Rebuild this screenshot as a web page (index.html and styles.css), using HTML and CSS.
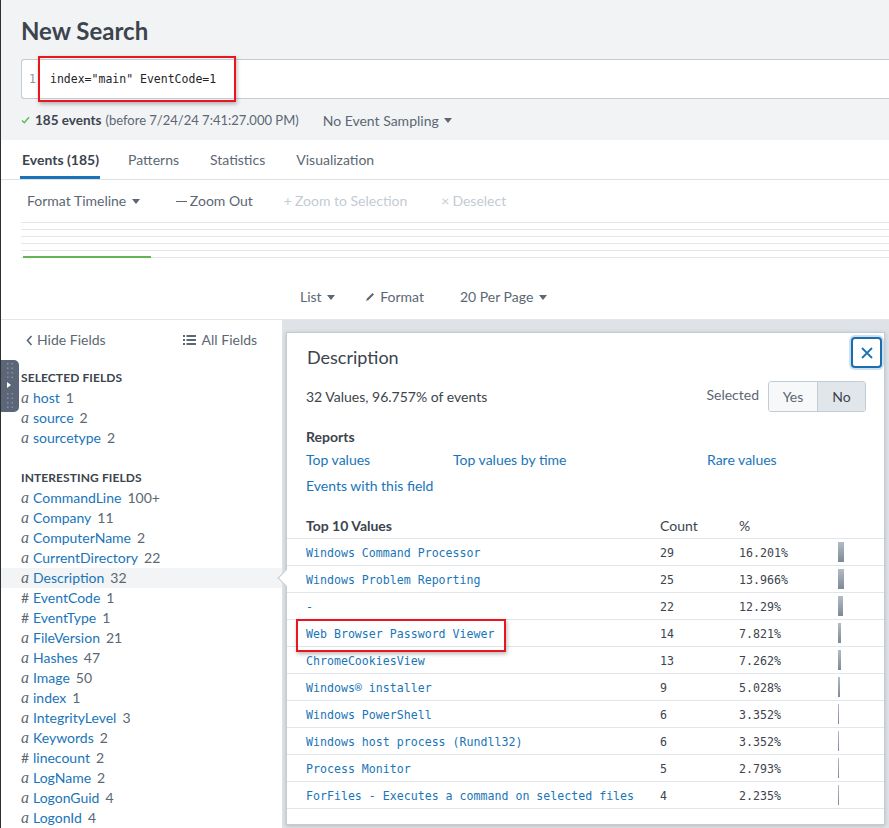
FILE: index.html
```html
<!DOCTYPE html>
<html>
<head>
<meta charset="utf-8">
<title>New Search</title>
<link rel="stylesheet" href="styles.css">
</head>
<body>
<div class="app">
  <header class="search-head">
    <h1>New Search</h1>
    <div class="search-box">
      <span class="ln">1</span>
      <span class="query">index="main" EventCode=1</span>
      <span class="annot annot-query"></span>
    </div>
    <div class="status">
      <svg class="ok" width="9" height="8" viewBox="0 0 9 8"><polyline points="1,4.5 3.3,6.8 8,1.2" fill="none" stroke="#5cb85c" stroke-width="1.4"/></svg>
      <b class="count">185 events</b>
      <span class="before">(before 7/24/24 7:41:27.000 PM)</span>
      <span class="sampling">No Event Sampling <i class="caret"></i></span>
    </div>
  </header>

  <nav class="tabs">
    <span class="tab active">Events (185)</span>
    <span class="tab">Patterns</span>
    <span class="tab">Statistics</span>
    <span class="tab">Visualization</span>
  </nav>

  <section class="timeline">
    <div class="tl-tools">
      <span class="tl-item fmt">Format Timeline <i class="caret"></i></span>
      <span class="tl-item zoomout"><i class="minus"></i>Zoom Out</span>
      <span class="tl-item disabled zoomsel"><span class="sym">+</span>Zoom to Selection</span>
      <span class="tl-item disabled desel"><span class="sym">×</span>Deselect</span>
    </div>
    <div class="tl-chart">
      <div class="tl-line"></div>
      <div class="tl-line"></div>
      <div class="tl-line"></div>
      <div class="tl-line"></div>
      <div class="tl-line"></div>
      <div class="tl-line"></div>
      <div class="tl-bar"></div>
    </div>
  </section>

  <div class="list-tools">
    <span class="lt-item">List <i class="caret"></i></span>
    <span class="lt-item fmt2"><svg width="10" height="10" viewBox="0 0 10 10"><path d="M1 9 L2 6.5 L7.5 1 L9 2.5 L3.5 8 Z" fill="#5c6773"/></svg>Format</span>
    <span class="lt-item perpage">20 Per Page <i class="caret"></i></span>
  </div>

  <div class="main">
    <aside class="fields">
      <div class="fields-head">
        <span class="hide"><svg width="7" height="11" viewBox="0 0 7 11"><polyline points="5.5,1 1.5,5.5 5.5,10" fill="none" stroke="#5c6773" stroke-width="1.6"/></svg>Hide Fields</span>
        <span class="allf"><svg width="13" height="10" viewBox="0 0 13 10"><g fill="#5c6773"><rect x="0" y="0" width="2" height="2"/><rect x="0" y="4" width="2" height="2"/><rect x="0" y="8" width="2" height="2"/><rect x="3.5" y="0" width="9.5" height="2"/><rect x="3.5" y="4" width="9.5" height="2"/><rect x="3.5" y="8" width="9.5" height="2"/></g></svg>All Fields</span>
      </div>
      <div class="group-title sel">SELECTED FIELDS</div>
      <ul class="flist">
        <li><span class="ty">a</span><span class="fn">host</span><span class="fc">1</span></li>
        <li><span class="ty">a</span><span class="fn">source</span><span class="fc">2</span></li>
        <li><span class="ty">a</span><span class="fn">sourcetype</span><span class="fc">2</span></li>
      </ul>
      <div class="group-title int">INTERESTING FIELDS</div>
      <ul class="flist">
        <li><span class="ty">a</span><span class="fn">CommandLine</span><span class="fc">100+</span></li>
        <li><span class="ty">a</span><span class="fn">Company</span><span class="fc">11</span></li>
        <li><span class="ty">a</span><span class="fn">ComputerName</span><span class="fc">2</span></li>
        <li><span class="ty">a</span><span class="fn">CurrentDirectory</span><span class="fc">22</span></li>
        <li class="current"><span class="ty">a</span><span class="fn">Description</span><span class="fc">32</span></li>
        <li><span class="ty num">#</span><span class="fn">EventCode</span><span class="fc">1</span></li>
        <li><span class="ty num">#</span><span class="fn">EventType</span><span class="fc">1</span></li>
        <li><span class="ty">a</span><span class="fn">FileVersion</span><span class="fc">21</span></li>
        <li><span class="ty">a</span><span class="fn">Hashes</span><span class="fc">47</span></li>
        <li><span class="ty">a</span><span class="fn">Image</span><span class="fc">50</span></li>
        <li><span class="ty">a</span><span class="fn">index</span><span class="fc">1</span></li>
        <li><span class="ty">a</span><span class="fn">IntegrityLevel</span><span class="fc">3</span></li>
        <li><span class="ty">a</span><span class="fn">Keywords</span><span class="fc">2</span></li>
        <li><span class="ty num">#</span><span class="fn">linecount</span><span class="fc">2</span></li>
        <li><span class="ty">a</span><span class="fn">LogName</span><span class="fc">2</span></li>
        <li><span class="ty">a</span><span class="fn">LogonGuid</span><span class="fc">4</span></li>
        <li><span class="ty">a</span><span class="fn">LogonId</span><span class="fc">4</span></li>
      </ul>
    </aside>

    <section class="events">
      <div class="popover">
        <span class="pop-arrow"></span>
        <div class="pop-title">Description</div>
        <button class="close" type="button">
          <svg width="14" height="14" viewBox="0 0 14 14"><path d="M2 2 L12 12 M12 2 L2 12" stroke="#1a73b8" stroke-width="1.8" fill="none"/></svg>
        </button>
        <div class="pop-stats">
          <span class="vals">32 Values, 96.757% of events</span>
          <span class="sel-label">Selected</span>
          <span class="seg"><span class="seg-yes">Yes</span><span class="seg-no">No</span></span>
        </div>
        <div class="reports-title">Reports</div>
        <div class="reports">
          <a>Top values</a>
          <a>Top values by time</a>
          <a>Rare values</a>
          <a>Events with this field</a>
        </div>
        <div class="vtable">
          <div class="vrow vhead"><span class="c1">Top 10 Values</span><span>Count</span><span>%</span><span></span></div>
          <div class="vrow"><span class="c1 v">Windows Command Processor</span><span class="m">29</span><span class="m">16.201%</span><span class="bar" style="width:6px"></span></div>
          <div class="vrow"><span class="c1 v">Windows Problem Reporting</span><span class="m">25</span><span class="m">13.966%</span><span class="bar" style="width:6px"></span></div>
          <div class="vrow"><span class="c1 v">-</span><span class="m">22</span><span class="m">12.29%</span><span class="bar" style="width:5px"></span></div>
          <div class="vrow"><span class="c1 v">Web Browser Password Viewer<span class="annot annot-row"></span></span><span class="m">14</span><span class="m">7.821%</span><span class="bar" style="width:3px"></span></div>
          <div class="vrow"><span class="c1 v">ChromeCookiesView</span><span class="m">13</span><span class="m">7.262%</span><span class="bar" style="width:3px"></span></div>
          <div class="vrow"><span class="c1 v">Windows® installer</span><span class="m">9</span><span class="m">5.028%</span><span class="bar" style="width:2px"></span></div>
          <div class="vrow"><span class="c1 v">Windows PowerShell</span><span class="m">6</span><span class="m">3.352%</span><span class="bar" style="width:1px"></span></div>
          <div class="vrow"><span class="c1 v">Windows host process (Rundll32)</span><span class="m">6</span><span class="m">3.352%</span><span class="bar" style="width:1px"></span></div>
          <div class="vrow"><span class="c1 v">Process Monitor</span><span class="m">5</span><span class="m">2.793%</span><span class="bar" style="width:1px"></span></div>
          <div class="vrow"><span class="c1 v">ForFiles - Executes a command on selected files</span><span class="m">4</span><span class="m">2.235%</span><span class="bar" style="width:1px"></span></div>
        </div>
      </div>
    </section>
  </div>

  <div class="drag-handle">
    <svg width="18" height="52" viewBox="0 0 18 52">
      <g fill="#8792a0">
        <rect x="6" y="3" width="1.5" height="1.5"/><rect x="10.5" y="3" width="1.5" height="1.5"/>
        <rect x="6" y="7.5" width="1.5" height="1.5"/><rect x="10.5" y="7.5" width="1.5" height="1.5"/>
        <rect x="6" y="12" width="1.5" height="1.5"/><rect x="10.5" y="12" width="1.5" height="1.5"/>
        <rect x="6" y="16.5" width="1.5" height="1.5"/><rect x="10.5" y="16.5" width="1.5" height="1.5"/>
        <rect x="6" y="33" width="1.5" height="1.5"/><rect x="10.5" y="33" width="1.5" height="1.5"/>
        <rect x="6" y="37.5" width="1.5" height="1.5"/><rect x="10.5" y="37.5" width="1.5" height="1.5"/>
        <rect x="6" y="42" width="1.5" height="1.5"/><rect x="10.5" y="42" width="1.5" height="1.5"/>
        <rect x="6" y="46.5" width="1.5" height="1.5"/><rect x="10.5" y="46.5" width="1.5" height="1.5"/>
      </g>
      <polygon points="6,22 10,25 6,28" fill="#ffffff"/>
    </svg>
  </div>
</div>
</body>
</html>
```
FILE: styles.css
```css
* { box-sizing: border-box; }
html, body { margin: 0; padding: 0; }
body {
  width: 889px;
  height: 828px;
  overflow: hidden;
  background: #fff;
  font-family: Lato, "Open Sans", sans-serif;
  font-size: 14px;
  color: #3c444d;
}
.app {
  position: relative;
  height: 828px;
  border-left: 1px solid #2f2f2f;
  overflow: hidden;
}

/* header */
.search-head {
  background: #f2f3f5;
  padding: 16px 0 10px 20px;
}
h1 {
  margin: 0;
  font-size: 24px;
  line-height: 30px;
  font-weight: 700;
  color: #3c444d;
}
.search-box {
  position: relative;
  margin-top: 13px;
  height: 40px;
  border: 1px solid #c3cbd4;
  border-right: none;
  border-radius: 3px 0 0 3px;
  background: #fff;
  display: flex;
  align-items: center;
  font-family: "DejaVu Sans Mono", monospace;
  font-size: 11.5px;
}
.ln { width: 28px; padding-left: 7px; color: #8c959e; }
.query { color: #1f2429; }
.annot {
  position: absolute;
  border: 2px solid #e8161d;
  box-shadow: 1px 2px 4px rgba(0,0,0,0.28);
  pointer-events: none;
}
.annot-query { left: 16px; top: -4px; width: 198px; height: 46px; }

.status {
  margin-top: 11px;
  height: 20px;
  display: flex;
  align-items: center;
  color: #5c6773;
  white-space: nowrap;
}
.ok { margin: 0 5px 0 0; }
.count { color: #3c444d; font-weight: 700; font-size: 13.5px; }
.before { margin-left: 4px; font-size: 13px; }
.sampling { margin-left: 24px; color: #5c6773; }
.caret {
  display: inline-block;
  width: 0; height: 0;
  border-left: 4px solid transparent;
  border-right: 4px solid transparent;
  border-top: 5px solid #5c6773;
  vertical-align: middle;
  margin-left: 2px;
  position: relative;
  top: -1px;
}

/* tabs */
.tabs {
  display: flex;
  padding-left: 19px;
  height: 40px;
  border-bottom: 1px solid #dde2e6;
  background: #fff;
}
.tab {
  padding: 10px 1px 6px 2px;
  line-height: 20px;
  height: 39px;
  color: #5c6773;
  border-bottom: 3px solid transparent;
  margin-right: 28px;
}
.tab.active { color: #3c444d; font-weight: 700; border-bottom-color: #1a73b8; margin-right: 26px; }

/* timeline */
.tl-tools {
  display: flex;
  padding: 11px 0 0 26px;
  line-height: 20px;
  height: 31px;
  color: #5c6773;
}
.tl-item { white-space: nowrap; }
.zoomout { margin-left: 36px; }
.zoomsel { margin-left: 31px; }
.desel { margin-left: 34px; }
.disabled { color: #c3cbd4; }
.minus { display: inline-block; width: 11px; height: 1.5px; background: #5c6773; vertical-align: middle; margin-right: 3px; position: relative; top: -1px; }
.sym { margin-right: 3px; }
.tl-chart {
  position: relative;
  margin: 11px 0 0 20px;
}
.tl-line { height: 7px; border-top: 1px solid #e4e7ea; }
.tl-bar {
  position: absolute;
  left: 2px; top: 34px;
  width: 128px; height: 2px;
  background: #65b556;
}

.list-tools {
  display: flex;
  padding: 29px 0 12px 299px;
  line-height: 20px;
  height: 62px;
  border-bottom: 1px solid #e1e6eb;
  color: #5c6773;
  margin-top: -6px;
}
.fmt2 { margin-left: 30px; }
.fmt2 svg { margin-right: 5px; }
.perpage { margin-left: 36px; }

/* main */
.main {
  display: flex;
  height: 509px;
}
.fields {
  width: 281px;
  flex: none;
  background: #fff;
}
.fields-head {
  display: flex;
  padding: 10px 0 0 25px;
  line-height: 20px;
  color: #5c6773;
}
.hide svg { margin-right: 4px; vertical-align: -1px; }
.allf { margin-left: 77px; }
.allf svg { margin-right: 6px; vertical-align: 0; }
.group-title {
  padding-left: 20px;
  font-size: 12px;
  font-weight: 700;
  line-height: 20px;
  color: #3c444d;
  letter-spacing: 0.1px;
}
.group-title.sel { margin-top: 18px; }
.group-title.int { margin-top: 20px; }
.flist { list-style: none; margin: 0; padding: 0; }
.flist li {
  height: 20px;
  line-height: 20px;
  padding-left: 20px;
  white-space: nowrap;
}
.flist li.current { background: #f2f4f5; }
.ty {
  display: inline-block;
  width: 12px;
  font-family: "Liberation Serif", serif;
  font-style: italic;
  font-size: 16px;
  color: #5c6773;
}
.ty.num { font-family: Lato, sans-serif; font-style: normal; font-size: 14px; }
.fn { color: #1a75b8; }
.fc { color: #5c6773; margin-left: 6px; }

.events {
  position: relative;
  flex: 1;
  background: #dfe3e7;
}
.popover {
  position: absolute;
  left: 4px;
  top: 12px;
  width: 599px;
  height: 493px;
  background: #fff;
  border: 1px solid #c3cbd4;
  box-shadow: 0 1px 4px rgba(0,0,0,0.18);
}
.pop-arrow {
  position: absolute;
  left: -7px;
  top: 239px;
  width: 12px;
  height: 12px;
  background: #fff;
  border-left: 1px solid #c3cbd4;
  border-bottom: 1px solid #c3cbd4;
  transform: rotate(45deg);
}
.pop-title {
  padding: 14px 20px 0;
  font-size: 18px;
  line-height: 20px;
  color: #3c444d;
}
.close {
  position: absolute;
  right: 2px;
  top: 4px;
  width: 31px;
  height: 31px;
  padding: 0;
  border: 2px solid #1a6eaf;
  border-radius: 4px;
  background: #fff;
  box-shadow: 0 0 0 2px rgba(26,115,184,0.22);
  display: flex;
  align-items: center;
  justify-content: center;
}
.pop-stats {
  display: flex;
  align-items: center;
  height: 31px;
  margin-top: 14px;
  padding: 0 18px 0 19px;
}
.vals { flex: 1; }
.sel-label { color: #5c6773; margin-right: 9px; position: relative; top: -2px; }
.seg {
  display: flex;
  height: 31px;
  border: 1px solid #c3cbd4;
  border-radius: 3px;
  overflow: hidden;
}
.seg span { display: flex; align-items: center; justify-content: center; }
.seg-yes { width: 49px; background: #f7f8fa; color: #5c6773; border-right: 1px solid #c3cbd4; }
.seg-no { width: 47px; background: #e1e6eb; color: #3c444d; }
.reports-title {
  margin-top: 15px;
  padding-left: 19px;
  font-weight: 700;
  line-height: 20px;
}
.reports {
  display: grid;
  grid-template-columns: 147px 254px auto;
  row-gap: 6px;
  margin-top: 3px;
  padding-left: 19px;
  line-height: 20px;
}
.reports a { color: #1a75b8; }
.vtable { margin-top: 20px; }
.vrow {
  display: grid;
  grid-template-columns: 373px 79px 99px 1fr;
  height: 27px;
  border-bottom: 1px solid #e1e6eb;
  align-items: center;
}
.vrow.vhead { height: 23px; align-items: start; line-height: 20px; }
.vhead .c1 { font-weight: 700; }
.c1 { padding-left: 19px; position: relative; }
.v { color: #1a75b8; }
.v, .m {
  font-family: "DejaVu Sans Mono", monospace;
  font-size: 11.6px;
  white-space: pre;
  padding-top: 1px;
}
.m { color: #3c444d; }
.bar {
  align-self: start;
  margin-top: 3px;
  height: 20px;
  background: linear-gradient(#b3bcc6, #7d8996);
}
.annot-row { left: 9px; top: -7px; width: 210px; height: 33px; }

.drag-handle {
  position: absolute;
  left: 0;
  top: 360px;
  width: 18px;
  height: 52px;
  background: #5b6778;
  border-radius: 0 5px 5px 0;
}
.drag-handle svg { display: block; }
```
